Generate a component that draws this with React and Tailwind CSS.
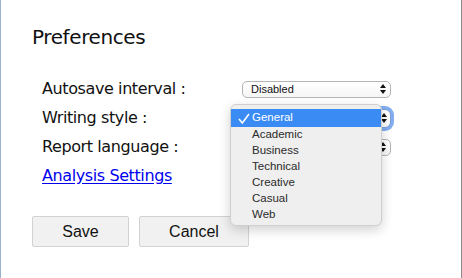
import React from "react";

function Arrows() {
  return (
    <svg width="6" height="10" viewBox="0 0 6 10" className="shrink-0">
      <path d="M3 0 L6 4 L0 4 Z" fill="#111" />
      <path d="M3 10 L6 6 L0 6 Z" fill="#111" />
    </svg>
  );
}

function SelectBox({ value, focused }) {
  return (
    <div
      className={
        focused
          ? "w-[149px] h-[19px] rounded-[6px] border border-[#7a9fd8] ring-[3px] ring-[#84aef0] bg-white flex items-center justify-between pl-[9px] pr-[3px]"
          : "w-[149px] h-[17px] rounded-[5px] border border-[#b4b4b4] bg-gradient-to-b from-white to-[#f6f6f6] flex items-center justify-between pl-[8px] pr-[4px]"
      }
    >
      <span className="font-['Liberation_Sans'] text-[11px] leading-none text-[#111]">{value}</span>
      <Arrows />
    </div>
  );
}

const styles = ["General", "Academic", "Business", "Technical", "Creative", "Casual", "Web"];

export default function App() {
  return (
    <div className="relative w-[462px] h-[278px] overflow-hidden bg-white border-l border-r border-l-[#9cb2d0] border-r-[#8c8c8c] font-['DejaVu_Sans',sans-serif]">
      <div className="pl-[31px] pt-[25px]">

        {/* Title */}
        <h1 className="text-[20px] leading-[24px] tracking-[-0.4px] text-[#111]">Preferences</h1>

        {/* Rows */}
        <div className="mt-[25.5px] pl-[10px]">
          <div className="h-[29px] flex items-center">
            <span className="w-[200px] text-[16px] leading-[20px] tracking-[-0.4px] text-[#111]">Autosave interval :</span>
            <SelectBox value="Disabled" />
          </div>
          <div className="h-[29px] flex items-center">
            <span className="w-[200px] text-[16px] leading-[20px] tracking-[-0.4px] text-[#111]">Writing style :</span>
            {/* value hidden behind the open list */}
            <SelectBox value="" focused />
          </div>
          <div className="h-[29px] flex items-center">
            <span className="w-[200px] text-[16px] leading-[20px] tracking-[-0.4px] text-[#111]">Report language :</span>
            <SelectBox value="" />
          </div>
          <div className="h-[29px] flex items-center">
            <a href="#" className="text-[16px] leading-[20px] tracking-[-0.4px] text-[#0000ee] underline underline-offset-2">
              Analysis Settings
            </a>
          </div>
        </div>

        {/* Buttons */}
        <div className="mt-[25.5px] flex gap-[10px] font-['Liberation_Sans']">
          <button className="w-[97px] h-[31px] bg-[#f1f1f1] border border-[#d2d2d2] rounded-[2px] text-[16px] text-[#111]">
            Save
          </button>
          <button className="w-[110px] h-[31px] bg-[#f1f1f1] border border-[#d2d2d2] rounded-[2px] text-[16px] text-[#111]">
            Cancel
          </button>
        </div>
      </div>

      {/* Open dropdown */}
      <div className="absolute left-[229px] top-[104px] w-[152px] h-[122px] rounded-[6px] border border-[#cfcfcf] bg-[#efefef] shadow-[0_4px_12px_rgba(0,0,0,0.18)] pt-[4px] overflow-hidden font-['Liberation_Sans']">
        {styles.map((s, i) =>
          i === 0 ? (
            <div key={s} className="h-[18px] bg-[#3a8cf4] flex items-center text-white text-[11.5px]">
              <svg width="12" height="11" viewBox="0 0 12 11" className="ml-[7px] mr-[2px]">
                <path d="M1 6 L4.3 10 L11 1" fill="none" stroke="#fff" strokeWidth="1.6" />
              </svg>
              {s}
            </div>
          ) : (
            <div key={s} className="h-[16px] flex items-center pl-[21px] text-[11.5px] text-[#2a2a2a]">
              {s}
            </div>
          )
        )}
      </div>
    </div>
  );
}
